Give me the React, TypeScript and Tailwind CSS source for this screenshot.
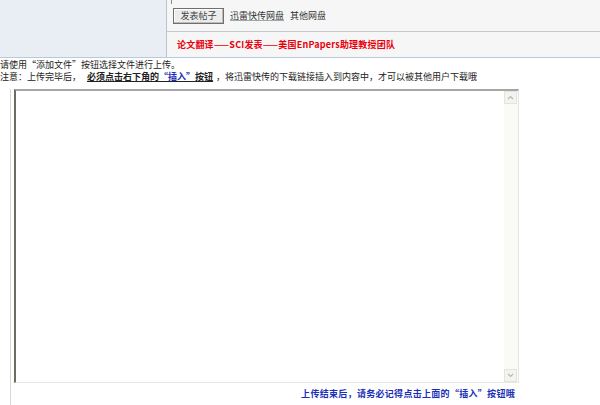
import React from 'react';

const font = { fontFamily: '"Noto Sans CJK SC", "DejaVu Sans", sans-serif' };

function ScrollArrow({ up }: { up: boolean }) {
  return (
    <div className="flex h-[13px] w-[13px] items-center justify-center border border-[#e4e4dc] bg-[#f4f4ee]">
      <svg width="7" height="5" viewBox="0 0 7 5">
        <path
          d={up ? 'M1 4 L3.5 1.5 L6 4' : 'M1 1 L3.5 3.5 L6 1'}
          fill="none"
          stroke="#b8b8b0"
          strokeWidth="1.2"
        />
      </svg>
    </div>
  );
}

export default function App() {
  return (
    <div className="relative h-[405px] w-[600px] overflow-hidden bg-white text-[9px] leading-[12px] text-[#222]" style={font}>
      {/* header table */}
      <div className="flex h-[58px] border-b border-[#bccad8]">
        <div className="w-[167px] border-r border-[#b6c4d2] bg-[#e8eef4]" />
        <div className="flex flex-1 flex-col bg-[#f6f6f6]">
          <div className="relative flex h-[32px] items-center gap-[6px] border-b border-[#c4c8cc] pl-[6px] pt-[1px]">
            <div className="absolute left-[4px] top-0 h-[4px] border-l border-[#8a8a8a]" />
            <button
              type="button"
              className="h-[16px] w-[51px] border border-[#6f6f6f] bg-[#ececec] text-[9px] leading-[14px] text-[#444] shadow-[inset_-1px_-1px_0_#bdbdbd,inset_1px_1px_0_#ffffff]"
              style={font}
            >
              发表帖子
            </button>
            <span className="text-[#333] underline decoration-[#9aa]">迅雷快传网盘</span>
            <span className="text-[#333]">其他网盘</span>
          </div>
          <div className="flex flex-1 items-center pl-[10px]">
            <span className="font-bold tracking-[0.2px] text-[#e8000b]">论文翻译——SCI发表——美国EnPapers助理教授团队</span>
          </div>
        </div>
      </div>

      {/* notes */}
      <div className="pt-[1px]">
        <div>请使用“添加文件”按钮选择文件进行上传。</div>
        <div>
          注意：上传完毕后，
          <span className="ml-[6px] font-bold underline">
            必须点击右下角的<span className="text-[#1a2fb8]">“插入”</span>按钮
          </span>
          <span className="ml-[3px]">，将迅雷快传的下载链接插入到内容中，才可以被其他用户下载哦</span>
        </div>
      </div>

      {/* editor area */}
      <div className="ml-[10px] mt-[6px] w-[508px] border-l border-[#d4d8dc] pl-[3px]">
        <div className="flex h-[294px] w-[505px] border-l-2 border-t-2 border-[#6b6e60] border-t-[#a6a6a6] border-r border-b border-r-[#e6e6e6] border-b-[#e6e6e6] bg-white">
          <div className="flex-1" />
          <div className="flex w-[14px] flex-col justify-between bg-[#fbfbf6]">
            <ScrollArrow up />
            <ScrollArrow up={false} />
          </div>
        </div>
        <div className="flex h-[22px] items-center justify-end pr-[3px]">
          <span className="font-bold tracking-[0.3px] text-[#1a2fb8]">上传结束后，请务必记得点击上面的“插入”按钮哦</span>
        </div>
      </div>
    </div>
  );
}
